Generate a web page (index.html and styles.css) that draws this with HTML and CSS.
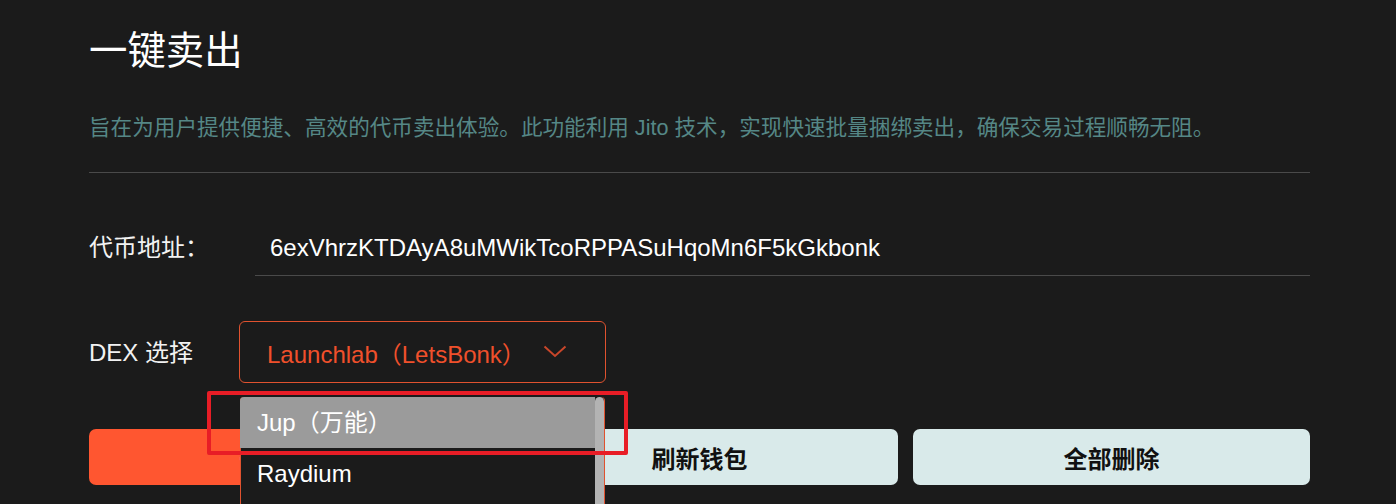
FILE: index.html
```html
<!DOCTYPE html>
<html lang="zh-CN">
<head>
<meta charset="utf-8">
<title>一键卖出</title>
<link rel="stylesheet" href="styles.css">
</head>
<body>
<main class="page">
  <h1 class="title">一键卖出</h1>
  <p class="desc">旨在为用户提供便捷、高效的代币卖出体验。此功能利用 Jito 技术，实现快速批量捆绑卖出，确保交易过程顺畅无阻。</p>
  <hr class="divider">

  <div class="row row-address">
    <label class="label">代币地址：</label>
    <div class="field">6exVhrzKTDAyA8uMWikTcoRPPASuHqoMn6F5kGkbonk</div>
  </div>

  <div class="row row-dex">
    <label class="label label-dex">DEX 选择</label>
    <div class="select-wrap">
      <div class="select">
        <span class="select-value">Launchlab（LetsBonk）</span>
        <svg class="chev" width="24" height="13" viewBox="0 0 24 13"><polyline points="1.5,1.5 12,11 22.5,1.5" fill="none" stroke="#c8462a" stroke-width="2"/></svg>
      </div>
      <ul class="options">
        <li class="option active">Jup（万能）</li>
        <li class="option">Raydium</li>
        <span class="scrollbar"></span>
      </ul>
      <div class="annot"></div>
    </div>
  </div>

  <div class="buttons">
    <button class="btn btn-primary">一键卖出</button>
    <button class="btn btn-light">刷新钱包</button>
    <button class="btn btn-light">全部删除</button>
  </div>
</main>
</body>
</html>
```

FILE: styles.css
```css
html, body {
  margin: 0;
  padding: 0;
  background: #1b1b1b;
  height: 100%;
  overflow: hidden;
}

body {
  font-family: "Liberation Sans", "Noto Sans CJK SC", sans-serif;
  color: #ffffff;
}

.page {
  padding: 28px 86px 0 89px;
}

.title {
  margin: 0;
  font-size: 38.4px;
  line-height: 46px;
  font-weight: 400;
  color: #ffffff;
}

.desc {
  margin: 38px 0 0;
  font-size: 21.6px;
  line-height: 32px;
  color: #558786;
}

.divider {
  margin: 28px 0 0;
  border: 0;
  height: 1px;
  background: #4a4a4a;
}

.row {
  display: flex;
  align-items: center;
}

.row-address {
  margin-top: 47px;
}

.label {
  width: 166px;
  flex: none;
  font-size: 24px;
  line-height: 32px;
  color: #f2f2f2;
}

.label-dex {
  width: 150px;
  padding-top: 2px;
}

.field {
  flex: 1;
  height: 55px;
  line-height: 56px;
  padding-left: 15px;
  border-bottom: 1px solid #4a4a4a;
  font-size: 24px;
  color: #ffffff;
}

.row-dex {
  margin-top: 45px;
}

.select-wrap {
  position: relative;
}

.select {
  box-sizing: border-box;
  width: 367px;
  height: 62px;
  border: 1px solid #e0522f;
  border-radius: 6px;
  display: flex;
  align-items: center;
  padding-left: 27px;
}

.select-value {
  font-size: 24px;
  color: #f0502b;
}

.chev {
  margin-left: 17px;
  margin-top: -2px;
}

.options {
  position: absolute;
  top: 76px;
  left: 1px;
  width: 365px;
  height: 140px;
  margin: 0;
  padding: 0;
  list-style: none;
  box-sizing: border-box;
  border-left: 1px solid #e0522f;
  border-right: 1px solid #e0522f;
  border-radius: 4px 4px 0 0;
  background: #1b1b1b;
  z-index: 2;
}

.option {
  height: 51px;
  line-height: 51px;
  padding-left: 16px;
  margin-right: 9px;
  font-size: 24px;
  color: #ffffff;
}

.option.active {
  background: #9b9b9b;
  margin-left: -1px;
  padding-left: 17px;
  border-radius: 4px 0 0 0;
}

.scrollbar {
  position: absolute;
  top: 0;
  right: 0;
  width: 9px;
  height: 140px;
  background: #b3b3b3;
  border-radius: 5px 5px 0 0;
}

.annot {
  position: absolute;
  left: -32px;
  top: 70px;
  width: 421px;
  height: 64px;
  box-sizing: border-box;
  border: 4px solid #e81d26;
  border-radius: 2px;
  z-index: 3;
}

.buttons {
  margin-top: 46px;
  display: grid;
  grid-template-columns: repeat(3, 1fr);
  gap: 15px;
}

.btn {
  height: 56px;
  border: 0;
  border-radius: 7px;
  font-family: "Liberation Sans", "Noto Sans CJK SC", sans-serif;
  font-size: 24px;
  font-weight: 700;
  color: #111111;
  padding: 0;
}

.btn-primary {
  background: #ff5630;
  color: #ffffff;
}

.btn-light {
  background: #d9eaea;
}
```
